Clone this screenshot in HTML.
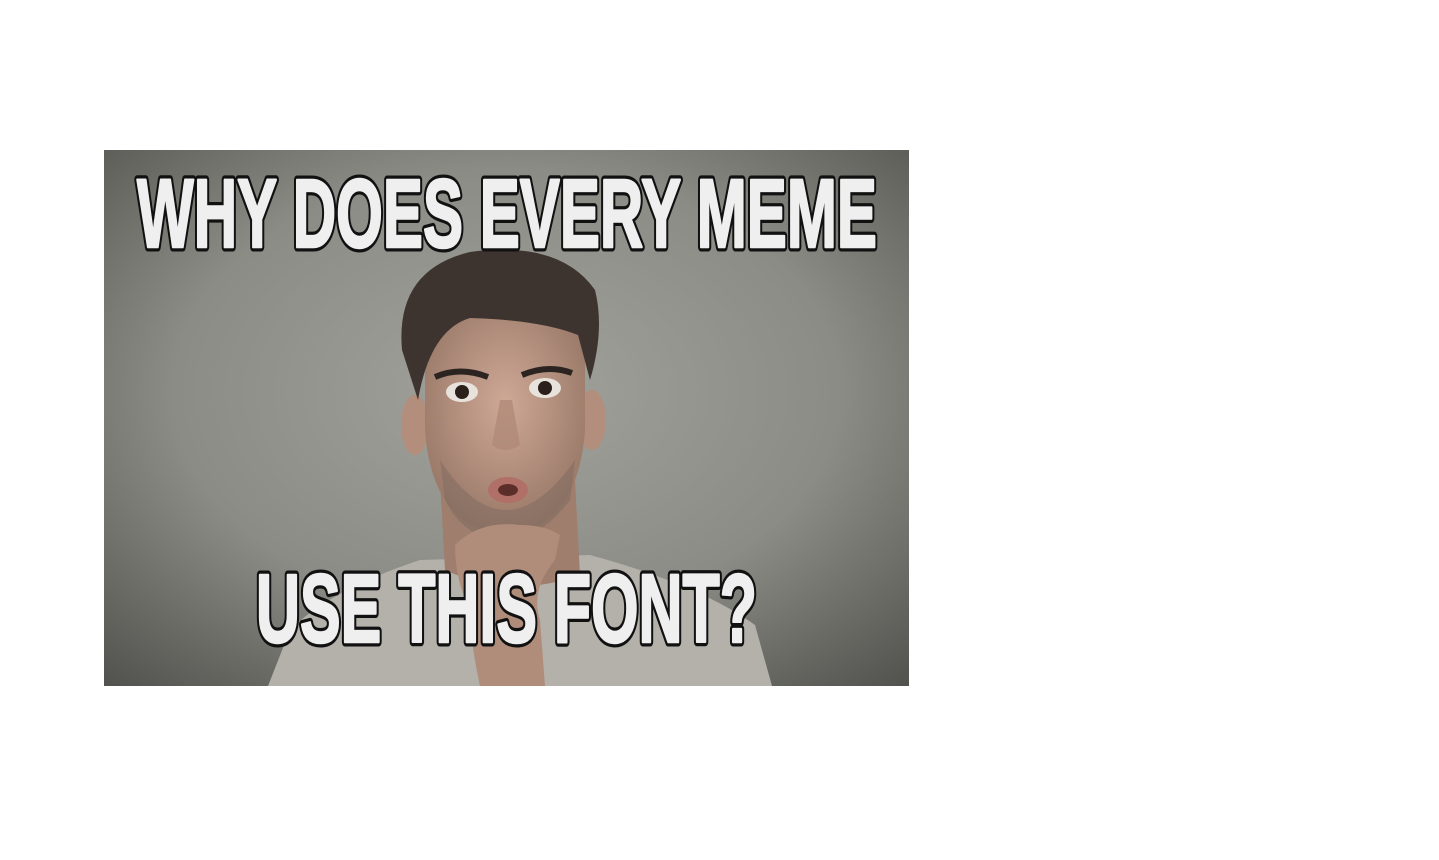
<!DOCTYPE html>
<html><head><meta charset="utf-8"><style>
html,body{margin:0;padding:0;background:#fff;width:1439px;height:860px;overflow:hidden}
svg{position:absolute;left:0;top:0}
</style></head><body>
<svg width="1439" height="860" viewBox="0 0 1439 860">
<defs>
<radialGradient id="bg" cx="0.5" cy="0.45" r="0.75">
<stop offset="0" stop-color="#a2a29c"/>
<stop offset="0.55" stop-color="#8c8c86"/>
<stop offset="1" stop-color="#50504c"/>
</radialGradient>
<radialGradient id="skin" cx="0.5" cy="0.4" r="0.6">
<stop offset="0" stop-color="#cfa896"/>
<stop offset="1" stop-color="#977766"/>
</radialGradient>
<clipPath id="c"><rect x="104" y="150" width="805" height="536"/></clipPath>
</defs>
<g clip-path="url(#c)">
<rect x="104" y="150" width="805" height="536" fill="url(#bg)"/>
<path d="M268 686 L290 630 Q330 590 420 560 L590 555 Q700 585 755 625 L772 686 Z" fill="#b3b1aa"/>
<path d="M440 480 L575 480 L580 575 Q510 600 445 570 Z" fill="#9f7e6d"/>
<ellipse cx="415" cy="425" rx="14" ry="30" fill="#b38e7c"/>
<ellipse cx="592" cy="420" rx="14" ry="30" fill="#b38e7c"/>
<path d="M425 330 Q505 300 585 330 L585 430 Q580 500 540 525 Q505 545 470 525 Q430 500 425 430 Z" fill="url(#skin)"/>
<path d="M440 460 Q505 560 575 460 L570 500 Q540 540 505 540 Q465 540 445 500 Z" fill="#7d6a60" opacity="0.5"/>
<path d="M402 350 Q395 270 470 252 Q560 240 595 290 Q605 330 590 380 L578 335 Q540 320 470 318 Q430 330 418 400 Z" fill="#3e342f"/>
<path d="M435 377 Q460 366 488 377" stroke="#2c2420" stroke-width="6" fill="none"/>
<path d="M522 375 Q548 364 572 373" stroke="#2c2420" stroke-width="6" fill="none"/>
<ellipse cx="462" cy="392" rx="16" ry="10" fill="#e8e2dc"/>
<circle cx="462" cy="392" r="7" fill="#2a1f1a"/>
<ellipse cx="545" cy="388" rx="16" ry="10" fill="#e8e2dc"/>
<circle cx="545" cy="388" r="7" fill="#2a1f1a"/>
<path d="M500 400 L492 445 Q505 455 520 445 L512 400" fill="#b08a78" opacity="0.8"/>
<ellipse cx="508" cy="490" rx="20" ry="13" fill="#b07068"/>
<ellipse cx="508" cy="490" rx="10" ry="6" fill="#5c2e2a"/>
<path d="M455 545 Q480 520 520 525 Q545 525 560 535 L555 560 Q530 590 540 620 L545 686 L480 686 Q470 640 470 610 Q455 580 455 545 Z" fill="#b08d7a"/>
</g>
<g font-family="'Liberation Sans Narrow','Liberation Sans',sans-serif" font-weight="bold" font-size="97" stroke-linejoin="round">
<g fill="#111" stroke="#111" stroke-width="9">
<text x="137" y="247" textLength="740" lengthAdjust="spacingAndGlyphs">WHY DOES EVERY MEME</text>
<text x="256" y="642" textLength="501" lengthAdjust="spacingAndGlyphs">USE THIS FONT?</text>
</g>
<g fill="#efefef" stroke="#efefef" stroke-width="2.5">
<text x="137" y="247" textLength="740" lengthAdjust="spacingAndGlyphs">WHY DOES EVERY MEME</text>
<text x="256" y="642" textLength="501" lengthAdjust="spacingAndGlyphs">USE THIS FONT?</text>
</g>
</g>
</svg>
</body></html>
